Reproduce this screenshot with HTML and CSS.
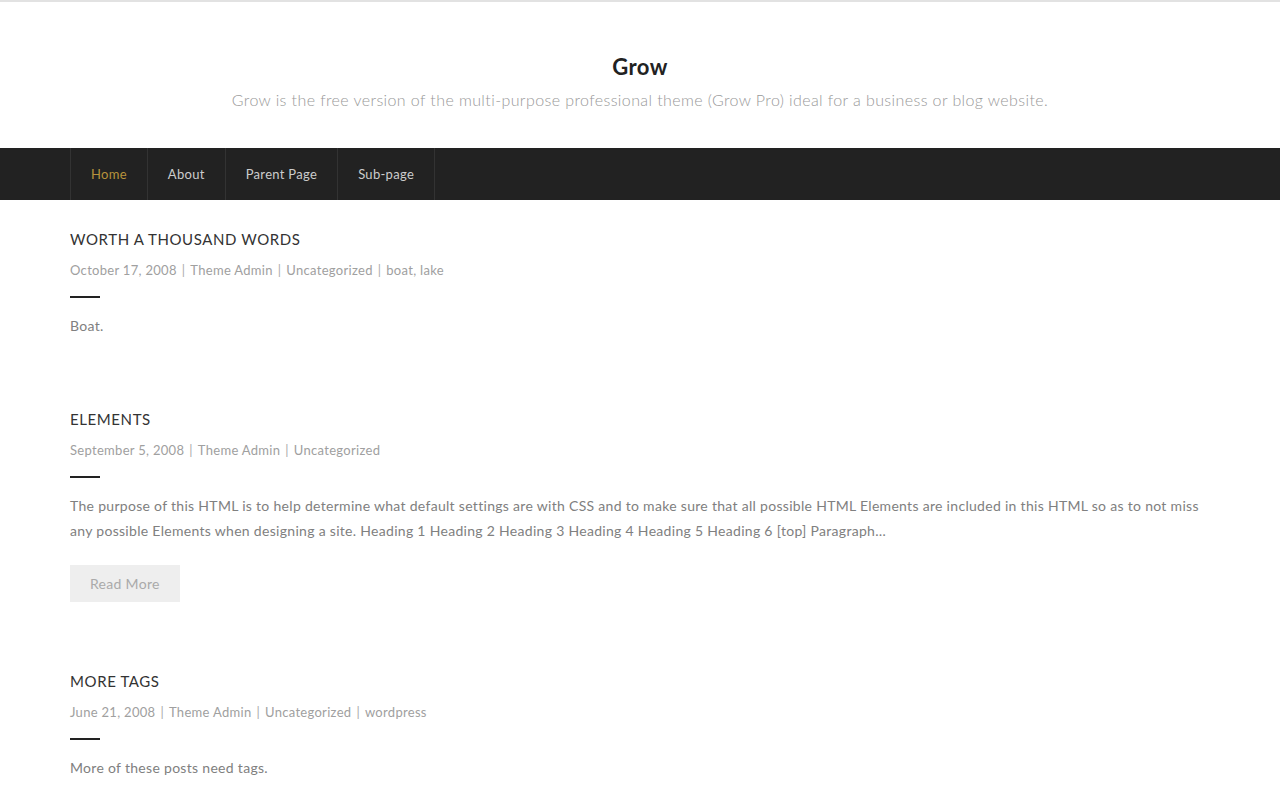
FILE: index.html
```html
<!DOCTYPE html>
<html lang="en">
<head>
<meta charset="utf-8">
<title>Grow</title>
<link rel="stylesheet" href="styles.css">
</head>
<body>
<header class="site-header">
  <h1 class="site-title">Grow</h1>
  <p class="site-desc">Grow is the free version of the multi-purpose professional theme (Grow Pro) ideal for a business or blog website.</p>
</header>
<nav class="main-nav">
  <ul class="menu">
    <li class="menu-item current"><a href="#">Home</a></li>
    <li class="menu-item"><a href="#">About</a></li>
    <li class="menu-item"><a href="#">Parent Page</a></li>
    <li class="menu-item"><a href="#">Sub-page</a></li>
  </ul>
</nav>
<main class="content">
  <article class="post">
    <h2 class="post-title">Worth A Thousand Words</h2>
    <div class="post-meta"><span>October 17, 2008</span><span class="sep">|</span><span>Theme Admin</span><span class="sep">|</span><span>Uncategorized</span><span class="sep">|</span><span>boat, lake</span></div>
    <div class="post-line"></div>
    <p class="post-text">Boat.</p>
  </article>
  <article class="post">
    <h2 class="post-title">Elements</h2>
    <div class="post-meta"><span>September 5, 2008</span><span class="sep">|</span><span>Theme Admin</span><span class="sep">|</span><span>Uncategorized</span></div>
    <div class="post-line"></div>
    <p class="post-text">The purpose of this HTML is to help determine what default settings are with CSS and to make sure that all possible HTML Elements are included in this HTML so as to not miss any possible Elements when designing a site. Heading 1 Heading 2 Heading 3 Heading 4 Heading 5 Heading 6 [top] Paragraph&hellip;</p>
    <a class="read-more" href="#">Read More</a>
  </article>
  <article class="post">
    <h2 class="post-title">More Tags</h2>
    <div class="post-meta"><span>June 21, 2008</span><span class="sep">|</span><span>Theme Admin</span><span class="sep">|</span><span>Uncategorized</span><span class="sep">|</span><span>wordpress</span></div>
    <div class="post-line"></div>
    <p class="post-text">More of these posts need tags.</p>
  </article>
</main>
</body>
</html>
```

FILE: styles.css
```css
* { box-sizing: border-box; }
html, body { margin: 0; padding: 0; }
body {
  font-family: Lato, "Open Sans", sans-serif;
  color: #777;
  background: #fff;
  border-top: 2px solid #e2e2e2;
}
.site-header {
  text-align: center;
  padding: 52px 0 38px;
}
.site-title {
  margin: 0;
  font-size: 22px;
  font-weight: 700;
  color: #222;
  line-height: 26px;
  letter-spacing: 0.4px;
}
.site-desc {
  margin: 10px 0 0;
  font-size: 16px;
  font-weight: 300;
  color: #999;
  line-height: 20px;
  letter-spacing: 0.4px;
}
.main-nav {
  background: #222;
  height: 52px;
  padding: 0 70px;
}
.menu {
  list-style: none;
  margin: 0;
  padding: 0;
  display: flex;
  height: 100%;
  border-left: 1px solid #333;
}
.menu-item {
  border-right: 1px solid #333;
  display: flex;
  align-items: center;
}
.menu-item a {
  display: block;
  padding: 0 20px 1px;
  color: #ccc;
  text-decoration: none;
  font-size: 13px;
  letter-spacing: 0.3px;
}
.menu-item.current a { color: #b8933c; }
.content {
  padding: 29px 70px 0;
}
.post { margin-bottom: 71px; }
.post-title {
  margin: 0;
  font-size: 15px;
  font-weight: 400;
  text-transform: uppercase;
  color: #333;
  line-height: 20px;
  letter-spacing: 0.6px;
}
.post-meta {
  margin-top: 12px;
  font-size: 13px;
  color: #a0a0a0;
  line-height: 18px;
  letter-spacing: 0.3px;
}
.post-meta .sep {
  margin: 0 5px;
  color: #aaa;
}
.post-line {
  width: 30px;
  height: 2px;
  background: #222;
  margin-top: 17px;
}
.post-text {
  margin: 15px 0 0;
  font-size: 14px;
  line-height: 25px;
  color: #808080;
  letter-spacing: 0.3px;
}
.read-more {
  display: block;
  width: max-content;
  margin-top: 22px;
  margin-bottom: -2px;
  background: #eee;
  color: #aaa;
  text-decoration: none;
  font-size: 14px;
  letter-spacing: 0.3px;
  padding: 0 20px;
  height: 37px;
  line-height: 37px;
}
```
